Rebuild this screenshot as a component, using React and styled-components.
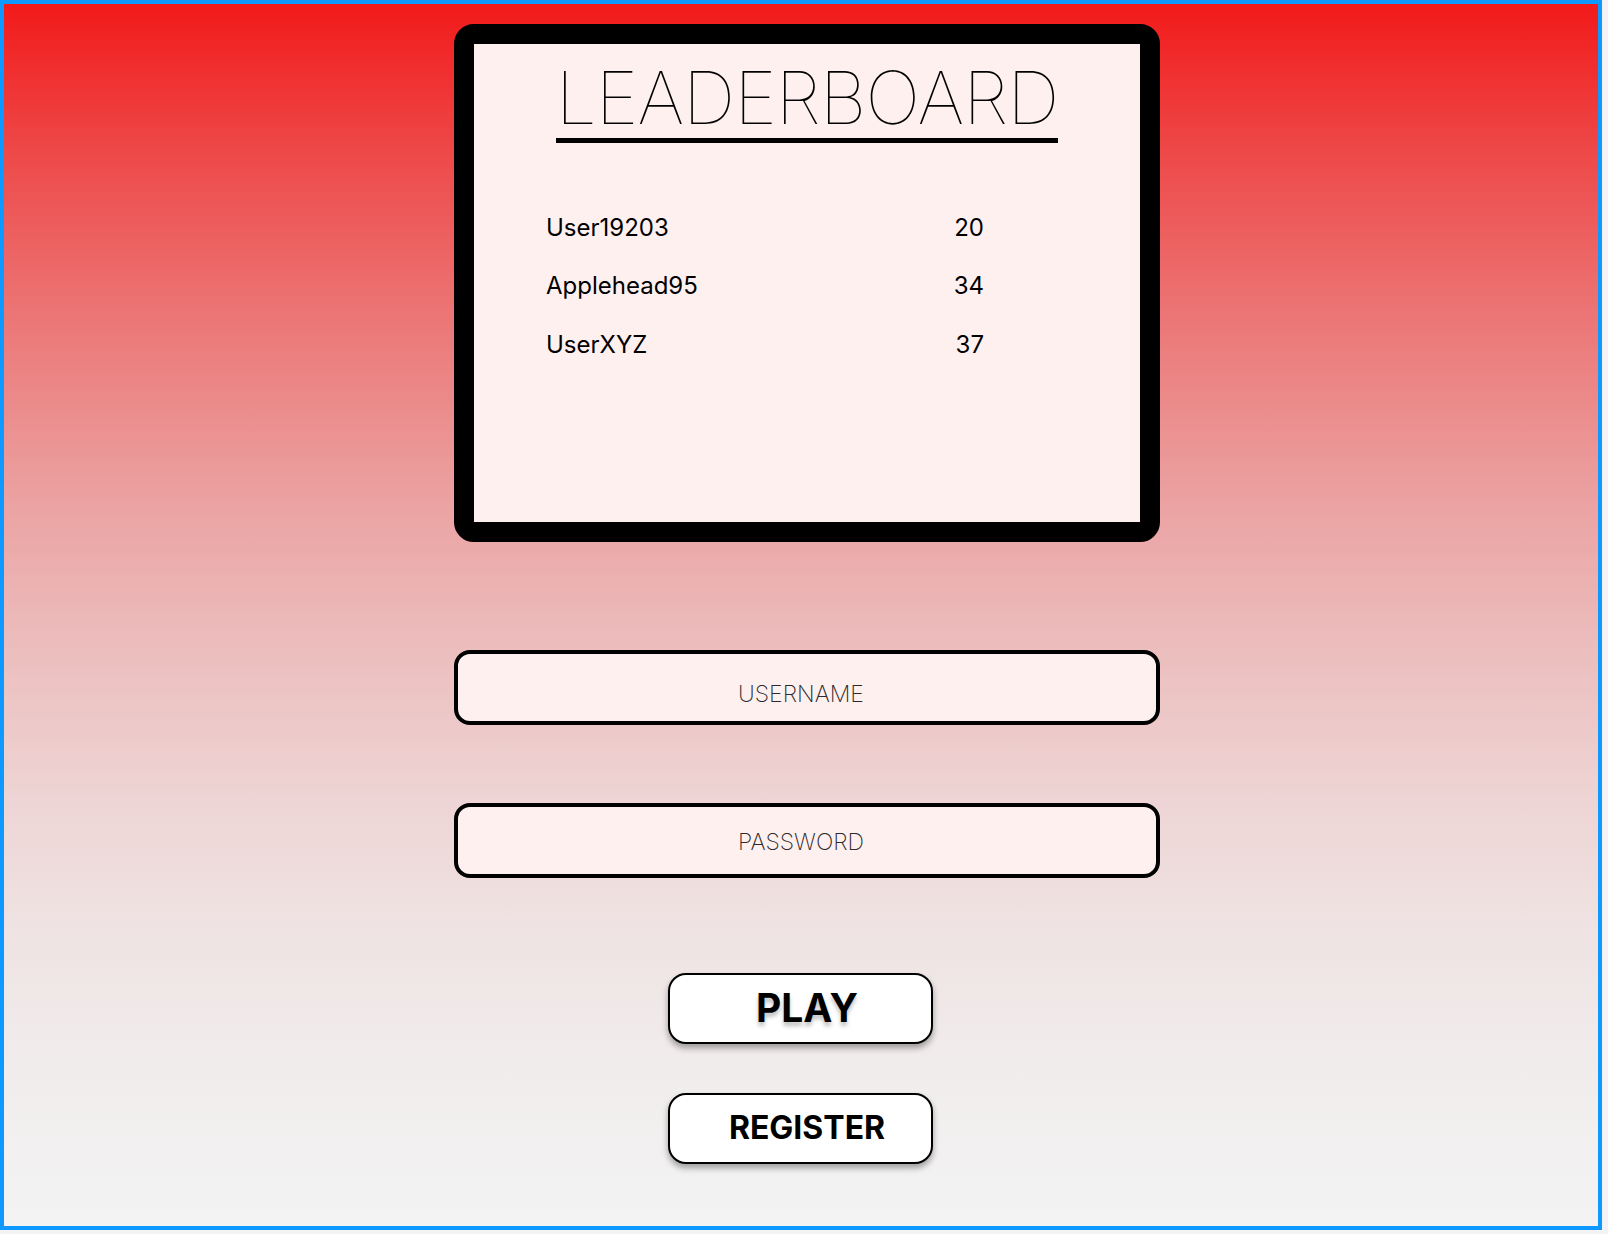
import React from "react";
import styled, { createGlobalStyle } from "styled-components";

const Global = createGlobalStyle`
  html, body { margin: 0; padding: 0; background: #f3f3f3; }
  body { font-family: Inter, "Noto Sans", sans-serif; color: #000; }
  * { box-sizing: border-box; }
`;

const Frame = styled.div`
  width: 1602px;
  height: 1230px;
  border: 4px solid #0d99ff;
  background: linear-gradient(180deg, #f21a1a 0%, #ee4848 12%, #ec7474 25%, #eba0a0 40%, #ecbcbc 52%, #eed4d4 65%, #efe3e3 76%, #f1eded 88%, #f3f3f3 100%);
  display: flex;
  flex-direction: column;
  align-items: flex-start;
  padding: 20px 0 0 450px;
`;

const Card = styled.section`
  width: 706px;
  height: 518px;
  border: 20px solid #000;
  border-radius: 20px;
  background: #fff0f0;
  display: flex;
  flex-direction: column;
  align-items: center;
  padding-top: 16px;
`;

const Title = styled.h1`
  margin: 0;
  font-family: Inter, sans-serif;
  font-weight: 100;
  font-size: 73px;
  line-height: 75px;
  letter-spacing: -1px;
  padding: 0 0 3px 0;
  border-bottom: 5px solid #000;
`;

const Rows = styled.div`
  align-self: flex-start;
  margin: 55px 0 0 72px;
  width: 438px;
  display: grid;
  grid-template-columns: 1fr auto;
  grid-auto-rows: 58.5px;
  align-items: center;
  font-size: 24px;
  font-weight: 400;
`;

const Name = styled.span``;
const Score = styled.span`
  text-align: right;
`;

const Field = styled.input`
  width: 706px;
  height: 75px;
  border: 4px solid #000;
  border-radius: 16px;
  background: #fff0f0;
  font-family: Inter, sans-serif;
  font-weight: 200;
  font-size: 23px;
  text-align: center;
  padding: ${(p) => p.$top}px 12px 0 0;
  margin-top: ${(p) => p.$gap}px;
  outline: none;
  &::placeholder { color: #2a2a2a; }
`;

const Button = styled.button`
  margin: ${(p) => p.$gap}px 0 0 214px;
  width: 265px;
  height: 71px;
  background: #fff;
  border: 2px solid #000;
  border-radius: 18px;
  box-shadow: 0 4px 6px rgba(0, 0, 0, 0.35);
  font-family: Inter, sans-serif;
  font-weight: 700;
  font-size: ${(p) => p.$size}px;
  padding: 0 0 2px 13px;
  color: #000;
  text-shadow: ${(p) => (p.$glow ? "0 4px 4px rgba(0,0,0,0.25)" : "none")};
  cursor: pointer;
`;

const scores = [
  ["User19203", 20],
  ["Applehead95", 34],
  ["UserXYZ", 37],
];

export default function App() {
  return (
    <>
      <Global />
      <Frame>
        <Card>
          <Title>LEADERBOARD</Title>
          <Rows>
            {scores.map(([n, s]) => (
              <React.Fragment key={n}>
                <Name>{n}</Name>
                <Score>{s}</Score>
              </React.Fragment>
            ))}
          </Rows>
        </Card>
        <Field placeholder="USERNAME" $gap={108} $top={12} />
        <Field placeholder="PASSWORD" type="password" $gap={78} $top={2} />
        <Button $gap={95} $size={39} $glow>PLAY</Button>
        <Button $gap={49} $size={32}>REGISTER</Button>
      </Frame>
    </>
  );
}
